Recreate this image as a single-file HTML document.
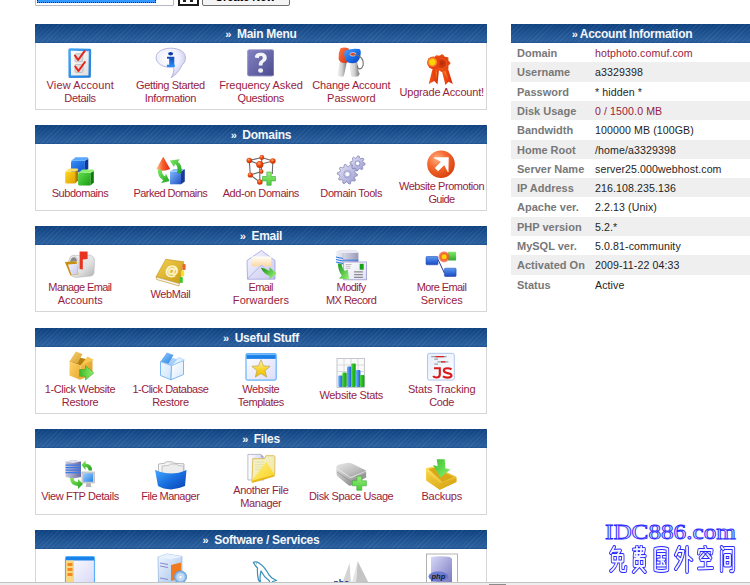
<!DOCTYPE html>
<html><head><meta charset="utf-8"><style>
html,body{margin:0;padding:0;background:#fff;width:750px;height:585px;overflow:hidden;position:relative;font-family:"Liberation Sans",sans-serif}
.hd{position:absolute;height:19px;background:linear-gradient(#0f427f,#1b4f8e 40%,#2a5f9d 90%,#1d508e);color:#f4f6fa;font-weight:bold;font-size:12px;letter-spacing:-0.25px;line-height:19px;text-align:center;overflow:hidden}
.hd::before{content:"";position:absolute;left:0;top:0;right:0;bottom:0;background:repeating-linear-gradient(-45deg,rgba(255,255,255,0) 0px,rgba(255,255,255,0) 2.4px,rgba(255,255,255,0.055) 2.4px,rgba(255,255,255,0.055) 3.4px)}
.hd span,.hd{z-index:1}
.rq{font-size:11px;position:relative;top:1px;margin-right:5.5px;letter-spacing:0}
.tt{position:relative;top:1px}
.rq2{font-size:11px;position:relative;top:1px;margin-right:2px;letter-spacing:0}
.bx{position:absolute;border:1px solid #d6d6d6;border-top:none;background:#fff}
.ic{position:absolute;width:32px;height:32px}
.ic svg{display:block}
.lb{position:absolute;width:120px;text-align:center;font-size:11px;line-height:13px;color:#961c40;white-space:nowrap}
.row{position:absolute;left:511px;width:239px;font-size:10.9px;line-height:19px}
.row.gr{background:#efefef}
.k{position:absolute;left:6px;top:1px;color:#787878;font-weight:bold;font-size:11px}
.v{position:absolute;left:84px;top:1px;color:#1e1e1e;font-size:10.6px;letter-spacing:0.1px}
.v.r{color:#961c40}
.wm{position:absolute;left:605px;top:520px;font-family:"Liberation Serif",serif;font-size:21px;line-height:24px;color:#eeeeff;-webkit-text-stroke:0.8px #2828ff;text-shadow:0 0 2px #d8d4e0,0 0 1px #d8d4e0;transform:scaleX(1.2);transform-origin:0 0;white-space:nowrap}
.top1{position:absolute;left:35px;top:-14px;width:136px;height:18px;border:1px solid #bcbcbc;background:#fff}
</style></head><body>
<div class="hd" style="top:24px;left:35px;width:452px"><span class="rq">&raquo;</span><span class="tt">Main Menu</span></div>
<div class="bx" style="top:43px;left:35px;width:450px;height:66px"></div>
<div class="ic" style="left:64.2px;top:46.5px"><svg width="32" height="32" viewBox="0 0 32 32" overflow="visible"><defs><linearGradient id="vw1" x1="0" y1="0" x2="1" y2="1"><stop offset="0" stop-color="#ffffff"/><stop offset="1" stop-color="#dedede"/></linearGradient><linearGradient id="vw2" x1="0" y1="0" x2="1" y2="1"><stop offset="0" stop-color="#4aa8f8"/><stop offset="1" stop-color="#1a78d8"/></linearGradient></defs><path d="M6 1.2 L25.8 1.8 Q27.2 1.8 27.2 3.2 L26.8 29.5 Q26.8 30.8 25.5 30.8 L6 31 Q4.5 31 4.5 29.5 L4.3 2.8 Q4.3 1.2 6 1.2 Z" fill="url(#vw2)"/><path d="M6.8 3.8 L24.8 4.2 L24.5 28.5 L7 28.6 Z" fill="url(#vw1)"/><rect x="11" y="6.7" width="7.7" height="8" rx="1.2" fill="#dcdcdc" stroke="#b0b0b0" stroke-width="0.7"/><rect x="11" y="17.5" width="8" height="8" rx="1.2" fill="#dcdcdc" stroke="#b0b0b0" stroke-width="0.7"/><path d="M11 8.5 L14.1 13 L20.6 4.2" fill="none" stroke="#e8201a" stroke-width="2" stroke-linecap="round" stroke-linejoin="round"/><path d="M11.3 19.5 L14.4 24 L20.9 15" fill="none" stroke="#e8201a" stroke-width="2" stroke-linecap="round" stroke-linejoin="round"/></svg></div>
<div class="lb" style="left:20.26px;top:78.5px;letter-spacing:0.127px">View Account</div>
<div class="lb" style="left:20.05px;top:91.5px;letter-spacing:-0.3px">Details</div>
<div class="ic" style="left:154.6px;top:46.5px"><svg width="32" height="32" viewBox="0 0 32 32" overflow="visible"><defs><radialGradient id="in1" cx="0.4" cy="0.35" r="0.7"><stop offset="0" stop-color="#ffffff"/><stop offset="0.55" stop-color="#eeeefc"/><stop offset="1" stop-color="#c4c4ec"/></radialGradient><linearGradient id="in2" x1="0" y1="0" x2="0" y2="1"><stop offset="0" stop-color="#1448b8"/><stop offset="1" stop-color="#2a90f8"/></linearGradient></defs><path d="M1.1 10.8 C1.1 4.5 8 1.2 15.8 1.2 C23.6 1.2 30.5 4.5 30.5 10.8 C30.5 14.5 28.5 17 27 18 C25 23 21 28 16.2 30.7 C18.5 27 19.2 23 18.7 20.3 C17.8 20.4 16.8 20.4 15.8 20.4 C8 20.4 1.1 16.5 1.1 10.8 Z" fill="url(#in1)" stroke="#b0b0dc" stroke-width="0.9"/><ellipse cx="15.6" cy="6.7" rx="2.5" ry="1.7" fill="#0c3aa8"/><path d="M12 9.8 L19.3 9.8 L19.3 17.8 L19.8 17.8 L19.8 19.9 L11.9 19.9 L11.9 17.8 L14.2 17.8 L14.2 11.8 L12 11.8 Z" fill="url(#in2)"/></svg></div>
<div class="lb" style="left:110.43px;top:78.5px;letter-spacing:-0.343px">Getting Started</div>
<div class="lb" style="left:110.43px;top:91.5px;letter-spacing:-0.34px">Information</div>
<div class="ic" style="left:245.0px;top:46.5px"><svg width="32" height="32" viewBox="0 0 32 32" overflow="visible"><defs><linearGradient id="fq1" x1="0" y1="0" x2="1" y2="1"><stop offset="0" stop-color="#8484c4"/><stop offset="1" stop-color="#4a4a8e"/></linearGradient></defs><rect x="2.3" y="2.4" width="26.7" height="26.8" rx="2" fill="url(#fq1)"/><rect x="2.8" y="2.9" width="25.7" height="25.8" rx="1.6" fill="none" stroke="#9a9ad0" stroke-width="0.8" opacity="0.7"/><path d="M9.8 10.5 C10 7 12.5 5.8 15.8 5.8 C19.5 5.8 21.8 7.8 21.8 10.8 C21.8 13.5 19.8 14.5 18.5 15.5 C17.7 16.1 17.5 17 17.5 18.5 L13.8 18.5 C13.6 16.3 14 14.6 15.8 13.4 C17.3 12.4 17.8 11.8 17.8 10.8 C17.8 9.7 17 9.1 15.8 9.1 C14.5 9.1 13.8 10 13.8 11.3 Z" fill="#f4f4f8"/><ellipse cx="15.6" cy="23.5" rx="2.5" ry="2.3" fill="#f0f0f4"/></svg></div>
<div class="lb" style="left:200.95px;top:78.5px;letter-spacing:-0.1px">Frequency Asked</div>
<div class="lb" style="left:200.82px;top:91.5px;letter-spacing:-0.35px">Questions</div>
<div class="ic" style="left:335.4px;top:46.5px"><svg width="32" height="32" viewBox="0 0 32 32" overflow="visible"><defs><linearGradient id="ky1" x1="0" y1="0" x2="1" y2="1"><stop offset="0" stop-color="#ff7a4a"/><stop offset="1" stop-color="#d8300e"/></linearGradient><linearGradient id="ky2" x1="0" y1="0" x2="1" y2="1"><stop offset="0" stop-color="#48a8ff"/><stop offset="0.5" stop-color="#1a70e8"/><stop offset="1" stop-color="#0a40b8"/></linearGradient><linearGradient id="ky3" x1="0" y1="0" x2="1" y2="0"><stop offset="0" stop-color="#f4f4f4"/><stop offset="0.5" stop-color="#d0d0d0"/><stop offset="1" stop-color="#7a7a7a"/></linearGradient></defs><path d="M4.6 15 L11.8 15 L9 28.5 Q8.3 30 6.5 29.8 L3.8 29.3 Q2.3 28.8 2.5 27.3 Z" fill="url(#ky3)"/><path d="M14.2 15 L22.2 15 L23.5 24 L24.7 27 L23 29.5 L17.5 29.8 Q16 29.5 15.8 28 Z" fill="url(#ky3)"/><path d="M5.5 1.2 Q9.5 -0.2 13.8 1.5 L13.5 14.5 Q11.5 16.5 8.5 16 Q4.5 15.5 3.6 12 Q3 6 5.5 1.2 Z" fill="url(#ky1)"/><path d="M10.5 3.5 Q17 0.8 24.5 2 Q26 2.8 25.8 6 Q25.3 12.5 21.5 15.5 Q17 17.3 12.5 15.2 Q9.5 12 9.2 7.5 Q9.2 4.5 10.5 3.5 Z" fill="url(#ky2)"/><ellipse cx="17.9" cy="7.3" rx="3" ry="1.8" fill="#e8401a" stroke="#e8e8f0" stroke-width="0.7"/><path d="M17.5 7.5 Q26 7.5 28 14 Q29 20 25.5 21.8 Q22.5 22.5 22.5 18.5" fill="none" stroke="#6e6e6e" stroke-width="1.1"/></svg></div>
<div class="lb" style="left:291.30px;top:78.5px;letter-spacing:-0.2px">Change Account</div>
<div class="lb" style="left:291.43px;top:91.5px;letter-spacing:0.057px">Password</div>
<div class="ic" style="left:425.8px;top:53.5px"><svg width="32" height="32" viewBox="0 0 32 32" overflow="visible"><defs><radialGradient id="rb1" cx="0.55" cy="0.5" r="0.55"><stop offset="0" stop-color="#b82808"/><stop offset="0.55" stop-color="#e0400e"/><stop offset="1" stop-color="#f45a18"/></radialGradient><linearGradient id="rb2" x1="0" y1="0" x2="1" y2="0"><stop offset="0" stop-color="#f85a18"/><stop offset="1" stop-color="#d82a08"/></linearGradient><radialGradient id="rb3" cx="0.5" cy="0.5" r="0.5"><stop offset="0" stop-color="#fff080"/><stop offset="0.5" stop-color="#ffc030"/><stop offset="1" stop-color="#f06020"/></radialGradient></defs><path d="M6.8 14 L13 15.5 L11.5 30.5 L8.3 27 L2.7 30 Z" fill="url(#rb2)"/><path d="M15.5 15.5 L21.8 14 L26.8 30 L22.5 27.8 L19.4 31 Z" fill="url(#rb2)"/><path d="M9.5 17 L11.3 17.5 L10 27 Z M17.5 17.5 L19.5 17 L22.5 26.5 Z" fill="#f8a020" opacity="0.6"/><polygon points="24.50,9.20 24.12,10.11 23.26,10.87 22.54,11.54 22.33,12.33 22.49,13.34 22.50,14.42 21.95,15.21 20.89,15.52 19.71,15.55 18.80,15.73 18.17,16.37 17.56,17.29 16.73,17.98 15.71,18.03 14.70,17.48 13.83,16.84 12.99,16.61 12.00,16.86 10.85,17.16 9.80,17.01 9.13,16.25 8.84,15.18 8.58,14.27 7.94,13.72 6.91,13.34 5.89,12.81 5.42,11.97 5.65,10.97 6.22,10.02 6.50,9.20 6.22,8.38 5.65,7.43 5.42,6.43 5.89,5.59 6.91,5.06 7.94,4.68 8.58,4.13 8.84,3.22 9.13,2.15 9.80,1.39 10.85,1.24 12.00,1.54 12.99,1.79 13.83,1.56 14.70,0.92 15.71,0.37 16.73,0.42 17.56,1.11 18.17,2.03 18.80,2.67 19.71,2.85 20.89,2.88 21.95,3.19 22.50,3.98 22.49,5.06 22.33,6.07 22.54,6.86 23.26,7.53 24.12,8.29" fill="url(#rb1)"/><circle cx="15.5" cy="9.8" r="5.2" fill="none" stroke="#f86a2a" stroke-width="0.9" opacity="0.7"/><circle cx="7.5" cy="8.8" r="6.3" fill="#e8400e"/><circle cx="6.4" cy="8.1" r="5" fill="url(#rb3)"/><circle cx="6.4" cy="8.1" r="2.8" fill="#ffd400"/></svg></div>
<div class="lb" style="left:381.71px;top:85.5px;letter-spacing:-0.187px">Upgrade Account!</div>
<div class="hd" style="top:125px;left:35px;width:452px"><span class="rq">&raquo;</span><span class="tt">Domains</span></div>
<div class="bx" style="top:144px;left:35px;width:450px;height:66px"></div>
<div class="ic" style="left:64.2px;top:154.5px"><svg width="32" height="32" viewBox="0 0 32 32" overflow="visible"><defs><linearGradient id="cb1" x1="0" y1="0" x2="1" y2="1"><stop offset="0" stop-color="#3a90f8"/><stop offset="1" stop-color="#0c50d0"/></linearGradient><linearGradient id="cb2" x1="0" y1="0" x2="1" y2="1"><stop offset="0" stop-color="#ffd820"/><stop offset="1" stop-color="#e0a000"/></linearGradient><linearGradient id="cb3" x1="0" y1="0" x2="1" y2="1"><stop offset="0" stop-color="#60e050"/><stop offset="1" stop-color="#1a9a10"/></linearGradient></defs><path d="M8.5 5.66 L20.84 5.66 L20.84 16.2 Q20.84 17.2 19.84 17.2 L8.5 17.2 Q7 17.2 7 15.7 L7 7.16 Q7 5.66 8.5 5.66Z" fill="url(#cb1)"/><path d="M20.84 5.66 L24.3 3.7 L24.3 13.739999999999998 L20.84 17.2 Z" fill="#0a3a98"/><path d="M7 5.66 L10.46 3.2 Q10.96 2.2 11.96 2.2 L23.3 2.2 Q24.3 2.2 24.3 3.7 L20.84 5.66 Z" fill="#5aa8ff"/><path d="M2.7 16.5 L11.2 16.5 L11.2 27.5 Q11.2 28.5 10.2 28.5 L2.7 28.5 Q1.2 28.5 1.2 27.0 L1.2 18.0 Q1.2 16.5 2.7 16.5Z" fill="url(#cb2)"/><path d="M11.2 16.5 L14.2 15.0 L14.2 25.5 L11.2 28.5 Z" fill="#b07800"/><path d="M1.2 16.5 L4.2 14.5 Q4.7 13.5 5.7 13.5 L13.2 13.5 Q14.2 13.5 14.2 15.0 L11.2 16.5 Z" fill="#ffe060"/><path d="M15.6 17.64 L26.659999999999997 17.64 L26.659999999999997 29.5 Q26.659999999999997 30.5 25.659999999999997 30.5 L15.6 30.5 Q14.1 30.5 14.1 29.0 L14.1 19.14 Q14.1 17.64 15.6 17.64Z" fill="url(#cb3)"/><path d="M26.659999999999997 17.64 L29.799999999999997 16.0 L29.799999999999997 27.36 L26.659999999999997 30.5 Z" fill="#0a7a0a"/><path d="M14.1 17.64 L17.24 15.5 Q17.74 14.5 18.74 14.5 L28.799999999999997 14.5 Q29.799999999999997 14.5 29.799999999999997 16.0 L26.659999999999997 17.64 Z" fill="#8af070"/></svg></div>
<div class="lb" style="left:19.97px;top:186.5px;letter-spacing:-0.467px">Subdomains</div>
<div class="ic" style="left:154.6px;top:154.5px"><svg width="32" height="32" viewBox="0 0 32 32" overflow="visible"><defs><linearGradient id="pk1" x1="0" y1="0" x2="1" y2="0"><stop offset="0" stop-color="#ffc890"/><stop offset="0.45" stop-color="#f86030"/><stop offset="1" stop-color="#e02a10"/></linearGradient><linearGradient id="pk2" x1="0" y1="0" x2="1" y2="1"><stop offset="0" stop-color="#80b8ff"/><stop offset="1" stop-color="#2050c0"/></linearGradient><linearGradient id="pk3" x1="0" y1="0" x2="1" y2="1"><stop offset="0" stop-color="#80ea68"/><stop offset="1" stop-color="#1aa01a"/></linearGradient></defs><path d="M8.2 1.7 L15.2 14 Q8.2 17.5 1.3 14 Z" fill="url(#pk1)"/><path d="M15 16.5 L26 16.5 L26 29.3 L15 29.3 Z" fill="url(#pk2)"/><path d="M26 16.5 L29.8 14 L29.8 26.5 L26 29.3Z" fill="#1a3a98"/><path d="M15 16.5 L18.8 14 L29.8 14 L26 16.5Z" fill="#8ac0ff"/><path d="M22 18 Q23.5 10.5 20 9 L19 12 L14.8 5.5 L24.8 4.2 L22.8 6.8 Q27.5 9.5 26.5 18.5 Z" fill="url(#pk3)"/><path d="M2.8 14.5 L6.8 14.8 Q6.8 20 10.2 21.5 L10.8 18.5 L14.5 26 L6 28.2 L8.2 25.3 Q2.5 22 2.8 14.5 Z" fill="url(#pk3)"/></svg></div>
<div class="lb" style="left:110.33px;top:186.5px;letter-spacing:-0.538px">Parked Domains</div>
<div class="ic" style="left:245.0px;top:154.5px"><svg width="32" height="32" viewBox="0 0 32 32" overflow="visible"><defs><radialGradient id="ad1" cx="0.4" cy="0.35" r="0.6"><stop offset="0" stop-color="#ffb070"/><stop offset="0.5" stop-color="#f04a10"/><stop offset="1" stop-color="#c83000"/></radialGradient><linearGradient id="ad2" x1="0" y1="0" x2="0" y2="1"><stop offset="0" stop-color="#9af07a"/><stop offset="1" stop-color="#4ac83a"/></linearGradient></defs><g transform="translate(0.3,-1)"><g stroke="#6a6a6a" stroke-width="1.1" fill="none"><path d="M4 6.5 L16.5 3.5 L27.5 7 L14.5 10.5 Z"/><path d="M4 6.5 L5 21 L14.5 28 L14.5 10.5"/><path d="M27.5 7 L27 20"/><path d="M5 21 L16 17.5 L16.5 3.5"/></g><circle cx="4" cy="6.5" r="2.8" fill="url(#ad1)"/><circle cx="16.5" cy="3.5" r="2.4" fill="url(#ad1)"/><circle cx="27.5" cy="7" r="2.8" fill="url(#ad1)"/><circle cx="14.5" cy="10.5" r="3.6" fill="url(#ad1)"/><circle cx="5" cy="21" r="2.6" fill="url(#ad1)"/><circle cx="16" cy="17.5" r="2.2" fill="url(#ad1)"/><circle cx="14.5" cy="28" r="2.8" fill="url(#ad1)"/></g><path d="M21.8 17 L26.2 17 L26.2 21.5 L30.5 21.5 L30.5 25.9 L26.2 25.9 L26.2 30.3 L21.8 30.3 L21.8 25.9 L17.5 25.9 L17.5 21.5 L21.8 21.5Z" fill="url(#ad2)" stroke="#3aa83a" stroke-width="0.6"/></svg></div>
<div class="lb" style="left:200.80px;top:186.5px;letter-spacing:-0.4px">Add-on Domains</div>
<div class="ic" style="left:335.4px;top:154.5px"><svg width="32" height="32" viewBox="0 0 32 32" overflow="visible"><defs><linearGradient id="gr1" x1="0" y1="0" x2="1" y2="1"><stop offset="0" stop-color="#e6e6f6"/><stop offset="1" stop-color="#9a9ad0"/></linearGradient><linearGradient id="gr2" x1="0" y1="0" x2="0" y2="1"><stop offset="0" stop-color="#8080b8"/><stop offset="1" stop-color="#c0c0e0"/></linearGradient></defs><polygon points="30.10,8.40 29.96,9.86 27.77,10.54 27.26,11.51 27.90,13.70 26.77,14.64 24.74,13.57 23.69,13.89 22.60,15.90 21.14,15.76 20.46,13.57 19.49,13.06 17.30,13.70 16.36,12.57 17.43,10.54 17.11,9.49 15.10,8.40 15.24,6.94 17.43,6.26 17.94,5.29 17.30,3.10 18.43,2.16 20.46,3.23 21.51,2.91 22.60,0.90 24.06,1.04 24.74,3.23 25.71,3.74 27.90,3.10 28.84,4.23 27.77,6.26 28.09,7.31" fill="url(#gr1)" stroke="#7878b0" stroke-width="0.7"/><circle cx="22.6" cy="8.4" r="2.6" fill="none" stroke="#9090c8" stroke-width="0.8"/><circle cx="22.6" cy="8.4" r="1.6" fill="#fff"/><polygon points="22.40,19.20 22.28,20.76 19.82,21.61 19.35,22.74 20.49,25.08 19.47,26.27 16.98,25.51 15.94,26.15 15.49,28.71 13.96,29.08 12.40,27.00 11.18,26.90 9.31,28.71 7.86,28.11 7.82,25.51 6.88,24.72 4.31,25.08 3.49,23.74 4.98,21.61 4.70,20.42 2.40,19.20 2.52,17.64 4.98,16.79 5.45,15.66 4.31,13.32 5.33,12.13 7.82,12.89 8.86,12.25 9.31,9.69 10.84,9.32 12.40,11.40 13.62,11.50 15.49,9.69 16.94,10.29 16.98,12.89 17.92,13.68 20.49,13.32 21.31,14.66 19.82,16.79 20.10,17.98" fill="url(#gr1)" stroke="#7878b0" stroke-width="0.7"/><circle cx="12.4" cy="19.2" r="3.6" fill="none" stroke="#a0a0d0" stroke-width="1"/><circle cx="12.4" cy="19.2" r="1.9" fill="#fff"/></svg></div>
<div class="lb" style="left:291.20px;top:186.5px;letter-spacing:-0.4px">Domain Tools</div>
<div class="ic" style="left:425.8px;top:147.5px"><svg width="32" height="32" viewBox="0 0 32 32" overflow="visible"><defs><radialGradient id="pr1" cx="0.35" cy="0.3" r="0.75"><stop offset="0" stop-color="#ffb080"/><stop offset="0.45" stop-color="#f56a30"/><stop offset="1" stop-color="#d8400e"/></radialGradient></defs><circle cx="15" cy="16.2" r="13.8" fill="url(#pr1)"/><path d="M8 9.7 L22.4 9.4 L22.1 23.9 L18.3 16.7 L12.1 22.9 L9.1 19.9 L15.3 13.7 Z" fill="#ffffff" stroke="#fff" stroke-width="0.6" stroke-linejoin="round"/></svg></div>
<div class="lb" style="left:381.58px;top:179.5px;letter-spacing:-0.438px">Website Promotion</div>
<div class="lb" style="left:381.48px;top:192.5px;letter-spacing:-0.65px">Guide</div>
<div class="hd" style="top:226px;left:35px;width:452px"><span class="rq">&raquo;</span><span class="tt">Email</span></div>
<div class="bx" style="top:245px;left:35px;width:450px;height:66px"></div>
<div class="ic" style="left:64.2px;top:249.0px"><svg width="32" height="32" viewBox="0 0 32 32" overflow="visible"><defs><linearGradient id="mb1" x1="0" y1="0" x2="1" y2="1"><stop offset="0" stop-color="#fafafa"/><stop offset="0.6" stop-color="#e0e0e0"/><stop offset="1" stop-color="#b0b0b0"/></linearGradient><linearGradient id="mb2" x1="0" y1="0" x2="1" y2="1"><stop offset="0" stop-color="#f0f0ff"/><stop offset="1" stop-color="#c8c8f0"/></linearGradient></defs><path d="M8.5 6.5 L25 6 Q30.5 6.5 30.5 12.5 L30 24 Q29.5 26.5 27 27 L12 28.5 Q5 28 4.5 17 Q4.8 7.5 8.5 6.5 Z" fill="url(#mb1)" stroke="#b8b8b8" stroke-width="0.6"/><ellipse cx="9.5" cy="15.5" rx="5" ry="9.2" fill="#e8e8e8" stroke="#c0c0c0" stroke-width="0.6"/><path d="M6 13 Q7 8 10 8.2 Q12.5 8.5 13 12 Z" fill="#8a8a8a"/><path d="M0.9 13 L12.6 12.2 L14.4 25.3 L6.4 26.6 Z" fill="#c8900e"/><path d="M4 15.5 L13 14.8 L14 25 L7.5 26 Z" fill="url(#mb2)"/><path d="M15.6 2.5 L23.6 2.5 L23.6 10 L18.8 10.4 L18.8 20.4 L15.6 20 Z" fill="#e8341e"/></svg></div>
<div class="lb" style="left:19.90px;top:281.0px;letter-spacing:-0.6px">Manage Email</div>
<div class="lb" style="left:20.18px;top:294.0px;letter-spacing:-0.043px">Accounts</div>
<div class="ic" style="left:154.6px;top:256.0px"><svg width="32" height="32" viewBox="0 0 32 32" overflow="visible"><defs><linearGradient id="wm1" x1="0" y1="0" x2="1" y2="1"><stop offset="0" stop-color="#f4d050"/><stop offset="1" stop-color="#c89a18"/></linearGradient></defs><path d="M10.8 3.3 L28.8 5.8 L24.5 27.6 L1 20.8 Z" fill="url(#wm1)" stroke="#c09018" stroke-width="0.6"/><path d="M1 20.8 L24.5 27.6 L24 30 L1.6 23.5 Z" fill="#f2f2f2" stroke="#c09018" stroke-width="0.6"/><text x="10.5" y="19" font-family="Liberation Sans" font-size="13" fill="none" stroke="#fff4c8" stroke-width="0.9" transform="rotate(8 16 14)">@</text><rect x="27.6" y="8" width="3" height="6" rx="1" fill="#f06030"/><rect x="26.2" y="14.5" width="3" height="6" rx="1" fill="#ffe020"/><rect x="24.8" y="21" width="3" height="6" rx="1" fill="#40c828"/></svg></div>
<div class="lb" style="left:110.40px;top:288.0px;letter-spacing:-0.4px">WebMail</div>
<div class="ic" style="left:245.0px;top:249.0px"><svg width="32" height="32" viewBox="0 0 32 32" overflow="visible"><defs><linearGradient id="fw1" x1="0" y1="0" x2="1" y2="1"><stop offset="0" stop-color="#f8f8ff"/><stop offset="1" stop-color="#c8c8f0"/></linearGradient><linearGradient id="fw2" x1="0" y1="0" x2="0" y2="1"><stop offset="0" stop-color="#fffffa"/><stop offset="1" stop-color="#fcd8a0"/></linearGradient><linearGradient id="fw3" x1="0" y1="0" x2="1" y2="0.6"><stop offset="0" stop-color="#128a12"/><stop offset="1" stop-color="#90f070"/></linearGradient></defs><path d="M2 11.5 L16.5 1.6 L30 11.5 L30 30.2 L2.5 30.2 Z" fill="url(#fw1)" stroke="#a0a0e0" stroke-width="0.8"/><path d="M6.6 7.5 L26.3 7.5 L26.3 17.3 L19 17.3 L16.5 15.5 L14 17.3 L6.6 17.3 Z" fill="url(#fw2)"/><path d="M2.5 30 L16.5 16 L30 30" fill="none" stroke="#a8a8e0" stroke-width="0.8"/><path d="M15.8 18.5 Q21 19.5 24.5 22 L24.5 18.2 L31.5 24.2 L24.5 30.5 L24.5 26.8 Q19 25.5 15.8 18.5 Z" fill="url(#fw3)"/></svg></div>
<div class="lb" style="left:200.68px;top:281.0px;letter-spacing:-0.65px">Email</div>
<div class="lb" style="left:201.03px;top:294.0px;letter-spacing:0.067px">Forwarders</div>
<div class="ic" style="left:335.4px;top:249.0px"><svg width="32" height="32" viewBox="0 0 32 32" overflow="visible"><defs><linearGradient id="mx1" x1="0" y1="0" x2="1" y2="0"><stop offset="0" stop-color="#f4f4fc"/><stop offset="1" stop-color="#9a9ab8"/></linearGradient><linearGradient id="mx2" x1="0" y1="0" x2="1" y2="1"><stop offset="0" stop-color="#ffffff"/><stop offset="1" stop-color="#e0e0f4"/></linearGradient><linearGradient id="mx3" x1="0" y1="0" x2="1" y2="1"><stop offset="0" stop-color="#1a9a1a"/><stop offset="1" stop-color="#9af07a"/></linearGradient></defs><path d="M0.7 2.5 L8 4 L23.4 3.5 L23.4 14.8 L8 16 L0.7 14.5 Z" fill="url(#mx1)"/><path d="M0.7 2.5 L6 0.8 L21 0.7 L23.4 3.5 L8 4 Z" fill="#e8e8f4"/><path d="M8 4 L8 16" stroke="#b0b0c8" stroke-width="0.5"/><path d="M1 8 L8 9.5 M1 10.5 L8 12 M1 13 L8 14.5 M8 11.2 L23.4 11.2" stroke="#2a7ae8" stroke-width="1"/><rect x="8.7" y="13" width="22.7" height="17.8" fill="url(#mx2)" stroke="#9898d0" stroke-width="0.8"/><rect x="24.7" y="14.8" width="4" height="5.9" fill="#18a018"/><path d="M10.5 15.5 L16.7 15.5 M10.5 17.3 L15.5 17.3 M10.5 19.2 L15.5 19.2" stroke="#a8a8a8" stroke-width="0.7"/><path d="M19.1 22.8 L27.8 22.8 M19.1 25.6 L27.8 25.6 M19.1 28.4 L27.8 28.4" stroke="#8a8a8a" stroke-width="1.3"/><path d="M3 14.5 L6.5 14.8 Q7.5 20 10 22 L12.8 20.5 L14 30.5 L4 29.5 L6.8 26.5 Q3 22 3 14.5 Z" fill="url(#mx3)"/></svg></div>
<div class="lb" style="left:291.14px;top:281.0px;letter-spacing:-0.52px">Modify</div>
<div class="lb" style="left:291.14px;top:294.0px;letter-spacing:-0.525px">MX Record</div>
<div class="ic" style="left:425.8px;top:249.0px"><svg width="32" height="32" viewBox="0 0 32 32" overflow="visible"><defs><linearGradient id="me1" x1="0" y1="0" x2="0" y2="1"><stop offset="0" stop-color="#5a9af4"/><stop offset="1" stop-color="#1a4ac0"/></linearGradient><linearGradient id="me2" x1="0" y1="0" x2="0" y2="1"><stop offset="0" stop-color="#80e868"/><stop offset="1" stop-color="#30a830"/></linearGradient><radialGradient id="me3" cx="0.5" cy="0.5" r="0.5"><stop offset="0" stop-color="#ffb030"/><stop offset="0.6" stop-color="#f06030"/><stop offset="1" stop-color="rgba(240,80,40,0.5)"/></radialGradient></defs><path d="M12 10.5 L18.4 24" stroke="#2a3a9a" stroke-width="1"/><rect x="0" y="7.5" width="12" height="8.3" rx="1" fill="url(#me1)" stroke="#1a3aa8" stroke-width="0.5"/><rect x="18.4" y="19.2" width="11.7" height="8.3" rx="1" fill="url(#me1)" stroke="#1a3aa8" stroke-width="0.5"/><rect x="21.8" y="2.8" width="8.3" height="8.7" rx="1" fill="url(#me2)"/><circle cx="18.1" cy="7.8" r="5.6" fill="url(#me3)"/><circle cx="18.1" cy="7.8" r="2.5" fill="#ffd400"/></svg></div>
<div class="lb" style="left:381.50px;top:281.0px;letter-spacing:-0.6px">More Email</div>
<div class="lb" style="left:381.79px;top:294.0px;letter-spacing:-0.029px">Services</div>
<div class="hd" style="top:328px;left:35px;width:452px"><span class="rq">&raquo;</span><span class="tt">Useful Stuff</span></div>
<div class="bx" style="top:347px;left:35px;width:450px;height:66px"></div>
<div class="ic" style="left:64.2px;top:350.5px"><svg width="32" height="32" viewBox="0 0 32 32" overflow="visible"><defs><linearGradient id="rs1" x1="0" y1="0" x2="1" y2="1"><stop offset="0" stop-color="#ffd468"/><stop offset="1" stop-color="#e8a830"/></linearGradient><linearGradient id="rs3" x1="0" y1="0" x2="1" y2="1"><stop offset="0" stop-color="#f8c048"/><stop offset="1" stop-color="#d89820"/></linearGradient><linearGradient id="rs4" x1="0" y1="0" x2="1" y2="1"><stop offset="0" stop-color="#f8d070"/><stop offset="1" stop-color="#d8a030"/></linearGradient><linearGradient id="rs2" x1="0" y1="0" x2="1" y2="0"><stop offset="0" stop-color="#40b828"/><stop offset="1" stop-color="#90f070"/></linearGradient></defs><path d="M5.5 10.5 L13 6 L28.5 9.5 L16.5 14.5 Z" fill="#b88010"/><path d="M5.5 10.5 L16.5 14.5 L16 28.8 L5.5 24.5 Z" fill="url(#rs1)"/><path d="M16.5 14.5 L28.5 9.5 L28.5 23.5 L16 28.8 Z" fill="url(#rs3)"/><path d="M5.5 10.5 L11.8 0.5 L18.5 3 L13.5 12.5 Z" fill="url(#rs4)"/><path d="M16.5 14.5 L23.5 5.5 L30 9 L28.5 9.5 Z" fill="#f8c850"/><path d="M15.6 18.5 L21.5 18.5 L21.5 14.7 L29.8 21.9 L21.5 29.1 L21.5 25.3 L15.6 25.3 Z" fill="url(#rs2)" stroke="#28a028" stroke-width="0.5"/></svg></div>
<div class="lb" style="left:20.01px;top:382.5px;letter-spacing:-0.386px">1-Click Website</div>
<div class="lb" style="left:20.07px;top:395.5px;letter-spacing:-0.267px">Restore</div>
<div class="ic" style="left:154.6px;top:350.5px"><svg width="32" height="32" viewBox="0 0 32 32" overflow="visible"><defs><linearGradient id="dr1" x1="0" y1="0" x2="1" y2="1"><stop offset="0" stop-color="#f0f8ff"/><stop offset="1" stop-color="#d0e4fa"/></linearGradient><linearGradient id="dr2" x1="0" y1="0" x2="1" y2="1"><stop offset="0" stop-color="#ffffff"/><stop offset="1" stop-color="#d8eafc"/></linearGradient><linearGradient id="dr3" x1="0" y1="0" x2="1" y2="1"><stop offset="0" stop-color="#a0d0ff"/><stop offset="1" stop-color="#2080e0"/></linearGradient></defs><path d="M5.5 10.5 L13 6 L28.5 9.5 L16.5 14.5 Z" fill="#a8d0f8"/><path d="M5.5 10.5 L16.5 14.5 L16 28.8 L5.5 24.5 Z" fill="url(#dr1)" stroke="#70b0f0" stroke-width="0.9"/><path d="M16.5 14.5 L28.5 9.5 L28.5 23.5 L16 28.8 Z" fill="url(#dr2)" stroke="#70b0f0" stroke-width="0.9"/><path d="M5.5 10.5 L11.8 1.5 L18.5 4 L13.5 12.5 Z" fill="url(#dr3)"/><path d="M16.5 14.5 L23.5 6.5 L29.5 9 Z" fill="#e0f0ff" stroke="#90c8f8" stroke-width="0.6"/></svg></div>
<div class="lb" style="left:110.35px;top:382.5px;letter-spacing:-0.493px">1-Click Database</div>
<div class="lb" style="left:110.47px;top:395.5px;letter-spacing:-0.267px">Restore</div>
<div class="ic" style="left:245.0px;top:350.5px"><svg width="32" height="32" viewBox="0 0 32 32" overflow="visible"><defs><linearGradient id="tp1" x1="0" y1="0" x2="1" y2="1"><stop offset="0" stop-color="#ffffff"/><stop offset="1" stop-color="#dcdcfa"/></linearGradient><linearGradient id="tp2" x1="0" y1="0" x2="0" y2="1"><stop offset="0" stop-color="#fff8c0"/><stop offset="0.6" stop-color="#f8d020"/><stop offset="1" stop-color="#f0c000"/></linearGradient></defs><rect x="1" y="2.6" width="30.2" height="26.5" rx="1.5" fill="url(#tp1)" stroke="#60b4fa" stroke-width="1.2"/><rect x="1.5" y="3.1" width="29.2" height="4.8" fill="#1a80e8"/><rect x="1.5" y="3.1" width="29.2" height="1" fill="#7ac0ff"/><polygon points="16.00,8.70 18.47,14.90 25.13,15.33 19.99,19.60 21.64,26.07 16.00,22.50 10.36,26.07 12.01,19.60 6.87,15.33 13.53,14.90" fill="url(#tp2)" stroke="#b8a040" stroke-width="0.7" stroke-linejoin="round"/></svg></div>
<div class="lb" style="left:200.82px;top:382.5px;letter-spacing:-0.35px">Website</div>
<div class="lb" style="left:200.76px;top:395.5px;letter-spacing:-0.475px">Templates</div>
<div class="ic" style="left:335.4px;top:356.5px"><svg width="32" height="32" viewBox="0 0 32 32" overflow="visible"><defs><linearGradient id="st1" x1="0" y1="0" x2="1" y2="0"><stop offset="0" stop-color="#6ab0f8"/><stop offset="1" stop-color="#1a60d0"/></linearGradient><linearGradient id="st2" x1="0" y1="0" x2="1" y2="0"><stop offset="0" stop-color="#4ad83a"/><stop offset="1" stop-color="#109a10"/></linearGradient></defs><g transform="translate(-1.5,-1)"><rect x="3.5" y="2.5" width="27.5" height="29" fill="#fafafa" stroke="#b8b8c0" stroke-width="0.8"/><path d="M3.5 9 L31 9 M3.5 15.5 L31 15.5 M3.5 22 L31 22 M10.5 2.5 L10.5 31.5 M17.5 2.5 L17.5 31.5 M24.5 2.5 L24.5 31.5" stroke="#d0d0d8" stroke-width="0.8"/><rect x="4.8" y="19.5" width="4.4" height="11.5" rx="1" fill="url(#st1)"/><rect x="8.8" y="16.5" width="4.4" height="14.5" rx="1" fill="url(#st2)"/><rect x="13.5" y="10.5" width="4.4" height="20.5" rx="1" fill="url(#st1)"/><rect x="17.8" y="7.5" width="4.4" height="23.5" rx="1" fill="url(#st2)"/><rect x="22.5" y="14" width="4.4" height="17" rx="1" fill="url(#st1)"/><rect x="26.5" y="19" width="4.4" height="12" rx="1" fill="url(#st2)"/></g></svg></div>
<div class="lb" style="left:291.24px;top:388.5px;letter-spacing:-0.317px">Website Stats</div>
<div class="ic" style="left:425.8px;top:350.5px"><svg width="32" height="32" viewBox="0 0 32 32" overflow="visible"><defs><linearGradient id="js1" x1="0" y1="0" x2="1" y2="1"><stop offset="0" stop-color="#e4eefc"/><stop offset="1" stop-color="#ffffff"/></linearGradient></defs><rect x="1.5" y="2.3" width="26.8" height="26.8" rx="2" fill="url(#js1)" stroke="#a8c0e8" stroke-width="0.9"/><path d="M5.2 5.7 L20.6 5.7 M8.3 8.2 L12 8.2 M11.4 10.8 L22.4 10.8 M8.3 13.1 L12 13.1" stroke="#a0a0a0" stroke-width="1.2"/><path d="M9.5 5.7 L18.1 5.7 M15 10.8 L19.4 10.8" stroke="#e02020" stroke-width="1.3"/><path d="M8 17.3 L13.8 17.3 L13.8 23.5 Q13.8 26.5 10.5 26.5 Q8 26.5 7.2 25" fill="none" stroke="#d81a1a" stroke-width="2.1"/><path d="M25.5 18.3 Q24 17.2 21.4 17.2 Q17.8 17.2 17.8 19.6 Q17.8 21.5 21.5 22.1 Q25.5 22.8 25.5 24.5 Q25.5 26.6 21.5 26.6 Q18.5 26.6 17 25.2" fill="none" stroke="#d81a1a" stroke-width="2.1"/></svg></div>
<div class="lb" style="left:381.72px;top:382.5px;letter-spacing:-0.154px">Stats Tracking</div>
<div class="lb" style="left:381.60px;top:395.5px;letter-spacing:-0.4px">Code</div>
<div class="hd" style="top:429px;left:35px;width:452px"><span class="rq">&raquo;</span><span class="tt">Files</span></div>
<div class="bx" style="top:448px;left:35px;width:450px;height:66px"></div>
<div class="ic" style="left:64.2px;top:457.5px"><svg width="32" height="32" viewBox="0 0 32 32" overflow="visible"><defs><linearGradient id="ft1" x1="0" y1="0" x2="1" y2="0"><stop offset="0" stop-color="#c8c8e0"/><stop offset="1" stop-color="#6a6aa0"/></linearGradient><linearGradient id="ft2" x1="0" y1="0" x2="1" y2="1"><stop offset="0" stop-color="#9ad0ff"/><stop offset="1" stop-color="#2a80e8"/></linearGradient><linearGradient id="ft3" x1="0" y1="0" x2="1" y2="1"><stop offset="0" stop-color="#8ae860"/><stop offset="1" stop-color="#1aa01a"/></linearGradient></defs><g transform="translate(0,-0.4)"><path d="M1.5 4 L9 2.5 L17 4 L17 19.5 L9 21 L1.5 19.5 Z" fill="url(#ft1)"/><path d="M1.5 4 L9 2.5 L17 4 L9 5.5 Z" fill="#e4e4f0"/><path d="M1.5 7.5 L17 7.5 M1.5 10 L17 10 M1.5 12.5 L17 12.5 M1.5 15 L17 15" stroke="#3a7ae8" stroke-width="1.1"/></g><path d="M17.5 7 L21.5 2.5 L21.5 5.5 Q28 6 28 12.5 L24.5 12.5 Q24.5 9 21.5 9 L21.5 12 Z" fill="url(#ft3)"/><rect x="18" y="14" width="12.3" height="11" fill="#d8d8d8" stroke="#a8a8a8" stroke-width="0.6"/><rect x="19.2" y="15.2" width="9.9" height="8.6" fill="url(#ft2)"/><path d="M21.5 29 L27.5 29 L26.5 25 L22.5 25Z" fill="#b8b8b8"/><path d="M6 20 L9.5 20 Q9.5 24 14 24 L14 21 L19 26 L14 31 L14 28 Q6 27.5 6 20Z" fill="url(#ft3)"/></svg></div>
<div class="lb" style="left:20.00px;top:489.5px;letter-spacing:-0.4px">View FTP Details</div>
<div class="ic" style="left:154.6px;top:457.5px"><svg width="32" height="32" viewBox="0 0 32 32" overflow="visible"><defs><linearGradient id="fm1" x1="0" y1="0" x2="1" y2="1"><stop offset="0" stop-color="#48a8ff"/><stop offset="0.5" stop-color="#1a70e0"/><stop offset="1" stop-color="#0a40b0"/></linearGradient></defs><g transform="translate(0,1)"><path d="M3.5 5 L10 4.2 L11 2.8 L17.5 2.8 L18.5 4.2 L29 4.8 L29 15 L3.5 15 Z" fill="#f6f6f6" stroke="#a0a0a0" stroke-width="0.7"/><path d="M7 7 L14 6.3 L15 5 L22 5 L23 6.5 L28.5 7 L28.5 15 L7 15Z" fill="#ececec" stroke="#a8a8a8" stroke-width="0.6"/><path d="M0 10.7 Q8 14.5 16 14.5 Q24 14.5 31.5 11 L30 27 Q23 30 16 30.5 Q8 30 3 27 Z" fill="url(#fm1)"/></g></svg></div>
<div class="lb" style="left:110.34px;top:489.5px;letter-spacing:-0.518px">File Manager</div>
<div class="ic" style="left:245.0px;top:451.5px"><svg width="32" height="32" viewBox="0 0 32 32" overflow="visible"><defs><linearGradient id="af0" x1="0" y1="0" x2="1" y2="0"><stop offset="0" stop-color="#ffffff"/><stop offset="1" stop-color="#d0d4f0"/></linearGradient><linearGradient id="af1" x1="0" y1="0" x2="1" y2="1"><stop offset="0" stop-color="#f4f2d0"/><stop offset="1" stop-color="#f0e8a0"/></linearGradient><linearGradient id="af2" x1="0" y1="0" x2="1" y2="1"><stop offset="0" stop-color="#fff080"/><stop offset="1" stop-color="#f8d020"/></linearGradient></defs><path d="M2.9 2.4 L16 2.4 L18.9 5.5 L18.9 28 L2.9 28 Z" fill="url(#af0)" stroke="#a0a0c0" stroke-width="0.7"/><path d="M16 2.4 L16 5.5 L18.9 5.5 Z" fill="#9aa0d8"/><path d="M7.8 6.7 L19.5 6.7 L20.8 3.7 L28.8 3.7 L30 4.5 L29.7 22.7 L7 29.5 Z" fill="url(#af1)" stroke="#d8b040" stroke-width="0.8"/><path d="M10 10 L19 10 M10 12.5 L19 12.5 M10 15 L19 15 M10 17.5 L18 17.5" stroke="#e0dca0" stroke-width="0.7"/><path d="M21.4 9.8 L29.7 22.7 L7 29.8 L6.5 29 Z" fill="url(#af2)"/><path d="M6.5 29 L29.7 22.7 L29.5 24.5 L7 31 Z" fill="#e8b818"/></svg></div>
<div class="lb" style="left:200.83px;top:483.5px;letter-spacing:-0.336px">Another File</div>
<div class="lb" style="left:200.85px;top:496.5px;letter-spacing:-0.3px">Manager</div>
<div class="ic" style="left:335.4px;top:457.5px"><svg width="32" height="32" viewBox="0 0 32 32" overflow="visible"><defs><linearGradient id="dk1" x1="0" y1="0" x2="0.6" y2="1"><stop offset="0" stop-color="#e8e8e8"/><stop offset="0.5" stop-color="#c0c0c0"/><stop offset="1" stop-color="#8a8a8a"/></linearGradient><linearGradient id="dk2" x1="0" y1="0" x2="0" y2="1"><stop offset="0" stop-color="#9af07a"/><stop offset="1" stop-color="#4ac83a"/></linearGradient></defs><g transform="translate(0,1)"><path d="M1.3 8 Q1.5 6 4 5.5 L13 3.8 Q15 3.6 17 4.5 L31 11.5 L31.2 18.5 L16 26.5 Q15 27 13.5 26.3 L2.8 17.5 Q1.6 16.5 1.5 15 Z" fill="url(#dk1)"/><path d="M1.5 8.5 L15.5 18 L31 11.8 L31.2 12.5 L15.8 19.2 L1.6 9.8 Z" fill="#f0f0f0" opacity="0.7"/><path d="M2 13 L15.5 22.5 L31.2 15" stroke="#8a8a8a" stroke-width="0.7" fill="none"/><path d="M21.8 17.2 L26.8 17.2 L26.8 21.8 L31.4 21.8 L31.4 26.8 L26.8 26.8 L26.8 31.3 L21.8 31.3 L21.8 26.8 L17.3 26.8 L17.3 21.8 L21.8 21.8 Z" fill="url(#dk2)" stroke="#38a838" stroke-width="0.6"/></g></svg></div>
<div class="lb" style="left:291.21px;top:489.5px;letter-spacing:-0.387px">Disk Space Usage</div>
<div class="ic" style="left:425.8px;top:457.5px"><svg width="32" height="32" viewBox="0 0 32 32" overflow="visible"><defs><linearGradient id="bk1" x1="0" y1="0" x2="1" y2="1"><stop offset="0" stop-color="#ffe060"/><stop offset="1" stop-color="#e0b020"/></linearGradient><linearGradient id="bk3" x1="0" y1="0" x2="1" y2="1"><stop offset="0" stop-color="#f8d040"/><stop offset="1" stop-color="#d0a010"/></linearGradient><linearGradient id="bk2" x1="0" y1="0" x2="1" y2="1"><stop offset="0" stop-color="#38c030"/><stop offset="1" stop-color="#90f070"/></linearGradient></defs><g transform="translate(0,1)"><path d="M0 9 L8.3 7.3 L30.4 17.8 L30.4 23 L13.8 30.7 L0.3 21.5 Z" fill="url(#bk1)"/><path d="M2.5 10 L8.5 8.8 L27.5 18 L16.5 23 Z" fill="#d8a818"/><path d="M0.3 12 L13.8 24 L30.4 19 L30.4 23 L13.8 30.7 L0.3 21.5 Z" fill="url(#bk3)"/><path d="M10.7 0.3 L18.7 0.3 L19.4 9.2 L24.3 10.4 L14.4 18.4 L7 6.1 L11.7 7.3 Z" fill="url(#bk2)"/></g></svg></div>
<div class="lb" style="left:381.68px;top:489.5px;letter-spacing:-0.233px">Backups</div>
<div class="hd" style="top:530px;left:35px;width:452px"><span class="rq">&raquo;</span><span class="tt">Software / Services</span></div>
<div class="bx" style="top:549px;left:35px;width:450px;height:66px"></div>
<div class="ic" style="left:64.2px;top:553.0px"><svg width="32" height="32" viewBox="0 0 32 32" overflow="visible"><defs><linearGradient id="s11" x1="0" y1="0" x2="1" y2="1"><stop offset="0" stop-color="#ffffff"/><stop offset="1" stop-color="#d8d8f8"/></linearGradient></defs><rect x="1.5" y="3.5" width="29" height="28" rx="1.5" fill="url(#s11)" stroke="#5ab0f8" stroke-width="1.2"/><rect x="2" y="4" width="28" height="3.5" fill="#1a82e8"/><rect x="2" y="7.5" width="8" height="24" fill="#f8d880"/><rect x="3.5" y="10" width="5" height="3" fill="#f08a20"/><rect x="3.5" y="15" width="5" height="3" fill="#f08a20"/><rect x="3.5" y="20" width="5" height="3" fill="#f08a20"/></svg></div>
<div class="ic" style="left:154.6px;top:553.0px"><svg width="32" height="32" viewBox="0 0 32 32" overflow="visible"><defs><linearGradient id="s21" x1="0" y1="0" x2="1" y2="1"><stop offset="0" stop-color="#f0f6ff"/><stop offset="1" stop-color="#a0c0e8"/></linearGradient><radialGradient id="s22" cx="0.5" cy="0.5" r="0.5"><stop offset="0" stop-color="#ffffff"/><stop offset="0.5" stop-color="#c0dcf8"/><stop offset="1" stop-color="#5a98d8"/></radialGradient></defs><path d="M3 4 L12 1 L27 3.5 L27 29 L15 32 L3.5 29 Z" fill="url(#s21)" stroke="#80a8d8" stroke-width="0.6"/><path d="M3 4 L12 1 L27 3.5 L16 6.5 Z" fill="#e8f2ff"/><path d="M5 10 L13 11.5 M5 13 L13 14.5 M5 25 L13 26.5" stroke="#8a8ad0" stroke-width="1.1"/><path d="M16 12 L26 9.5 L26 25 L16 28Z" fill="#f07a20"/><circle cx="25.5" cy="24" r="6.5" fill="url(#s22)"/><circle cx="25.5" cy="24" r="1.8" fill="#fff" stroke="#9ab0c8" stroke-width="0.6"/></svg></div>
<div class="ic" style="left:245.0px;top:553.0px"><svg width="32" height="32" viewBox="0 0 32 32" overflow="visible"><defs></defs><path d="M8.4 9.4 Q11 8 14 10 Q20 14 24 22 L27 25 L31.5 27.5 L27.5 28.5 L26 32 L24 27.5 Q19 24 16 18 Q14 26 16 30 L13.5 27 Q12 21 12.5 15 Q10 12.5 8.4 9.4 Z" fill="none" stroke="#3a90b8" stroke-width="1.2" stroke-linejoin="round"/><circle cx="11.5" cy="10.8" r="0.5" fill="#3a90b8"/></svg></div>
<div class="ic" style="left:335.4px;top:553.0px"><svg width="32" height="32" viewBox="0 0 32 32" overflow="visible"><defs></defs><path d="M14.6 10 L16 32 L6.6 32 Z" fill="#d4d4d4"/><path d="M22.6 8 L34.6 32 L20.6 32 Z" fill="#c4c4c4"/><path d="M22.6 8 L21 32 L16.5 32 Z" fill="#e4e4e4"/><text x="-1.4" y="33" font-family="Liberation Sans" font-weight="bold" font-size="8.5" fill="#2a2a7a">pho</text></svg></div>
<div class="ic" style="left:425.8px;top:553.0px"><svg width="32" height="32" viewBox="0 0 32 32" overflow="visible"><defs><linearGradient id="ph1" x1="0" y1="0" x2="1" y2="1"><stop offset="0" stop-color="#d8d8f8"/><stop offset="1" stop-color="#7878c0"/></linearGradient></defs><rect x="0.5" y="1" width="31" height="31" fill="#fff" stroke="#a0a0a0" stroke-width="0.8"/><path d="M5 4 Q14 2.5 24 4 L26 6 L26 30 L5 30 Z" fill="url(#ph1)"/><ellipse cx="12.5" cy="23.5" rx="10" ry="5" fill="#6a7ad0"/><text x="5.5" y="26" font-family="Liberation Sans" font-weight="bold" font-style="italic" font-size="7.5" fill="#1a1a2a">php</text></svg></div>
<div class="hd" style="top:24px;left:511px;width:236px;padding-left:3px"><span class="rq2">&raquo;</span><span class="tt">Account Information</span></div>
<div class="row" style="top:43.00px;height:19.31px"><span class="k">Domain</span><span class="v r">hotphoto.comuf.com</span></div>
<div class="row gr" style="top:62.31px;height:19.31px"><span class="k">Username</span><span class="v ">a3329398</span></div>
<div class="row" style="top:81.62px;height:19.31px"><span class="k">Password</span><span class="v ">* hidden *</span></div>
<div class="row gr" style="top:100.93px;height:19.31px"><span class="k">Disk Usage</span><span class="v r">0 / 1500.0 MB</span></div>
<div class="row" style="top:120.24px;height:19.31px"><span class="k">Bandwidth</span><span class="v ">100000 MB (100GB)</span></div>
<div class="row gr" style="top:139.55px;height:19.31px"><span class="k">Home Root</span><span class="v ">/home/a3329398</span></div>
<div class="row" style="top:158.86px;height:19.31px"><span class="k">Server Name</span><span class="v ">server25.000webhost.com</span></div>
<div class="row gr" style="top:178.17px;height:19.31px"><span class="k">IP Address</span><span class="v ">216.108.235.136</span></div>
<div class="row" style="top:197.48px;height:19.31px"><span class="k">Apache ver.</span><span class="v ">2.2.13 (Unix)</span></div>
<div class="row gr" style="top:216.79px;height:19.31px"><span class="k">PHP version</span><span class="v ">5.2.*</span></div>
<div class="row" style="top:236.10px;height:19.31px"><span class="k">MySQL ver.</span><span class="v ">5.0.81-community</span></div>
<div class="row gr" style="top:255.41px;height:19.31px"><span class="k">Activated On</span><span class="v ">2009-11-22 04:33</span></div>
<div class="row" style="top:274.72px;height:19.31px"><span class="k">Status</span><span class="v ">Active</span></div>
<div style="position:absolute;left:35px;top:-20px;width:137px;height:24px;border:1px solid #b4b8c4;border-radius:1px;background:#fff"></div>
<div style="position:absolute;left:37px;top:-10px;width:117px;height:12px;background:#3399ff;border:1px dotted #222;border-top:none"></div>
<div style="position:absolute;left:178px;top:-16px;width:17px;height:18px;border:2px solid #1a1a1a;background:#fff"></div>
<div style="position:absolute;left:183px;top:0px;width:3px;height:1.5px;background:#222"></div><div style="position:absolute;left:190px;top:0px;width:3px;height:1.5px;background:#222"></div>
<div style="position:absolute;left:202px;top:-18px;width:86px;height:22px;border:1px solid #707070;border-radius:2px;background:#f4f4f4"></div>
<div style="position:absolute;left:203px;top:0px;width:84px;height:2px;overflow:hidden"><div style="position:absolute;left:0;width:84px;top:-9px;text-align:center;font:bold 11px 'Liberation Sans';color:#000">Create New</div></div>
<div style="position:absolute;left:0;top:582px;width:750px;height:1px;background:#c4c4c4"></div>
<div style="position:absolute;left:0;top:583px;width:750px;height:2px;background:#efefef"></div>
<div style="position:absolute;left:489px;top:584px;width:17px;height:1px;background:#8a8a8a"></div>
<div class="wm">IDC886.com</div>
<svg style="position:absolute;left:606px;top:545px" width="132" height="30" viewBox="0 0 132 30">
<g fill="none" stroke="#2a2aff" stroke-width="4" stroke-linecap="round" stroke-linejoin="round">
<g transform="translate(4,1) scale(0.85,1)"><path d="M5 1 L1 7 M3 5 L12 4.5 L8.5 9 M3 9 L15 9 L15 15.5 L3 15.5 Z M9 9 L9 15.5 M8 15.5 Q7 21 1 25 M12.5 15.5 L12.5 23 Q12.5 25 15 25 L18 25 L18.5 21"/></g>
<g transform="translate(25,1) scale(0.85,1)"><path d="M3 3.5 L15.5 3 L14.5 7 L4.5 7 L4 10.5 L16.5 10 M7 0.5 L7 12 M12 0.5 Q12 10 8 13 M4 13 L15.5 13 L15.5 20 L4 20 Z M9.8 15 L9.8 19 M9 20.5 L3 26 M11 20.5 L16.5 26"/></g>
<g transform="translate(47,2) scale(0.85,1)"><path d="M2.5 2 Q10 0 17 2 L17 23 Q10 25 2.5 23 Z M5.5 7 L14 7 M6 12.5 L13.5 12.5 M5 18.5 L14.5 18.5 M9.8 7 L9.8 18.5 M11.8 14.5 L13.5 16.5"/></g>
<g transform="translate(68,1) scale(0.9,1)"><path d="M6 1 L2 9 M5 5 L10.5 5 Q9.5 14 2 23 M4 11 L7.5 14 M14.5 1 L14.5 26 M14.5 10 L19.5 14"/></g>
<g transform="translate(91,1) scale(0.85,1)"><path d="M9.5 0.5 L10.5 3 M2 7.5 L2.5 4 L17.5 4 L17 7.5 M8 8 L4 12 M12 8 L16 12 M5 14 L15 14 M10 14 L10 22 M2 22.5 L18 22"/></g>
<g transform="translate(113,1) scale(0.85,1)"><path d="M3 1 L5 3 M3 5 L3 25 M7 2 L17 2 L17 23 Q17 26 14 25 M7 9 L13 9 L13 19.5 L7 19.5 Z M7 14 L13 14"/></g>
</g>
<g fill="none" stroke="#f4f4ff" stroke-width="2" stroke-linecap="round" stroke-linejoin="round">
<g transform="translate(4,1) scale(0.85,1)"><path d="M5 1 L1 7 M3 5 L12 4.5 L8.5 9 M3 9 L15 9 L15 15.5 L3 15.5 Z M9 9 L9 15.5 M8 15.5 Q7 21 1 25 M12.5 15.5 L12.5 23 Q12.5 25 15 25 L18 25 L18.5 21"/></g>
<g transform="translate(25,1) scale(0.85,1)"><path d="M3 3.5 L15.5 3 L14.5 7 L4.5 7 L4 10.5 L16.5 10 M7 0.5 L7 12 M12 0.5 Q12 10 8 13 M4 13 L15.5 13 L15.5 20 L4 20 Z M9.8 15 L9.8 19 M9 20.5 L3 26 M11 20.5 L16.5 26"/></g>
<g transform="translate(47,2) scale(0.85,1)"><path d="M2.5 2 Q10 0 17 2 L17 23 Q10 25 2.5 23 Z M5.5 7 L14 7 M6 12.5 L13.5 12.5 M5 18.5 L14.5 18.5 M9.8 7 L9.8 18.5 M11.8 14.5 L13.5 16.5"/></g>
<g transform="translate(68,1) scale(0.9,1)"><path d="M6 1 L2 9 M5 5 L10.5 5 Q9.5 14 2 23 M4 11 L7.5 14 M14.5 1 L14.5 26 M14.5 10 L19.5 14"/></g>
<g transform="translate(91,1) scale(0.85,1)"><path d="M9.5 0.5 L10.5 3 M2 7.5 L2.5 4 L17.5 4 L17 7.5 M8 8 L4 12 M12 8 L16 12 M5 14 L15 14 M10 14 L10 22 M2 22.5 L18 22"/></g>
<g transform="translate(113,1) scale(0.85,1)"><path d="M3 1 L5 3 M3 5 L3 25 M7 2 L17 2 L17 23 Q17 26 14 25 M7 9 L13 9 L13 19.5 L7 19.5 Z M7 14 L13 14"/></g>
</g></svg>
</body></html>
